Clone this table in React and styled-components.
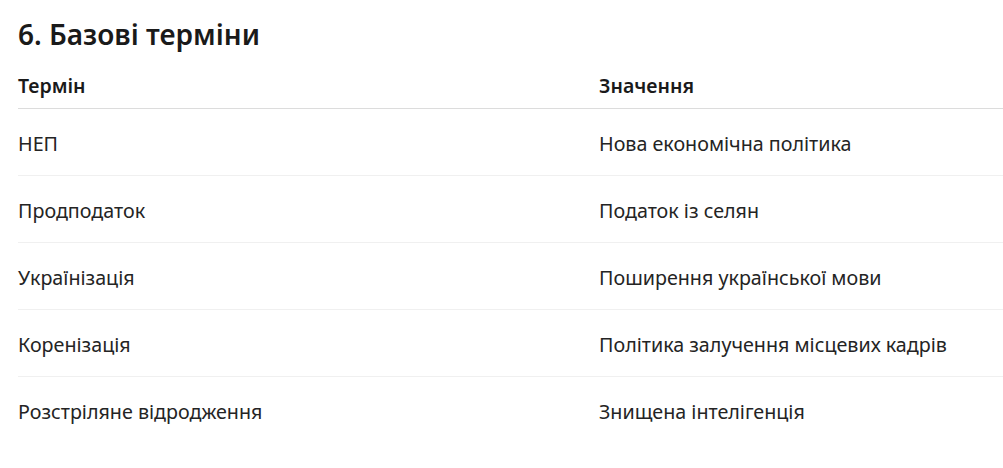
import React from 'react';
import styled, { createGlobalStyle } from 'styled-components';

const GlobalStyle = createGlobalStyle`
  body {
    margin: 0;
    background: #fff;
    font-family: 'Noto Sans', 'Open Sans', sans-serif;
    color: #242424;
  }
`;

const Page = styled.div`
  padding: 14px 0 0 18px;
  overflow: hidden;
`;

const Title = styled.h2`
  margin: 0 0 10px;
  font-size: 28px;
  font-weight: 600;
  line-height: 40px;
  color: #1a1a1a;
`;

const Table = styled.table`
  width: 1200px;
  border-collapse: collapse;
`;

const HeadCell = styled.th`
  width: ${(props) => props.width || 'auto'};
  padding: 10px 0 10px;
  text-align: left;
  font-size: 19.5px;
  font-weight: 600;
  line-height: 24px;
  color: #1a1a1a;
  border-bottom: 1px solid #dcdcdc;
`;

const Row = styled.tr`
  border-bottom: 1px solid ${(props) => (props.last ? 'transparent' : '#f0f0f0')};
`;

const Cell = styled.td`
  padding: 23px 0 19px;
  font-size: 19.7px;
  line-height: 24px;
  color: #242424;
`;

const DATA = [
  ['НЕП', 'Нова економічна політика'],
  ['Продподаток', 'Податок із селян'],
  ['Українізація', 'Поширення української мови'],
  ['Коренізація', 'Політика залучення місцевих кадрів'],
  ['Розстріляне відродження', 'Знищена інтелігенція'],
];

function App() {
  return (
    <Page>
      <GlobalStyle />
      <Title>6. Базові терміни</Title>
      <Table>
        <thead>
          <tr>
            <HeadCell width="581px">Термін</HeadCell>
            <HeadCell>Значення</HeadCell>
          </tr>
        </thead>
        <tbody>
          {DATA.map(([term, meaning], i) => (
            <Row key={term} last={i === DATA.length - 1}>
              <Cell>{term}</Cell>
              <Cell>{meaning}</Cell>
            </Row>
          ))}
        </tbody>
      </Table>
    </Page>
  );
}

export default App;
